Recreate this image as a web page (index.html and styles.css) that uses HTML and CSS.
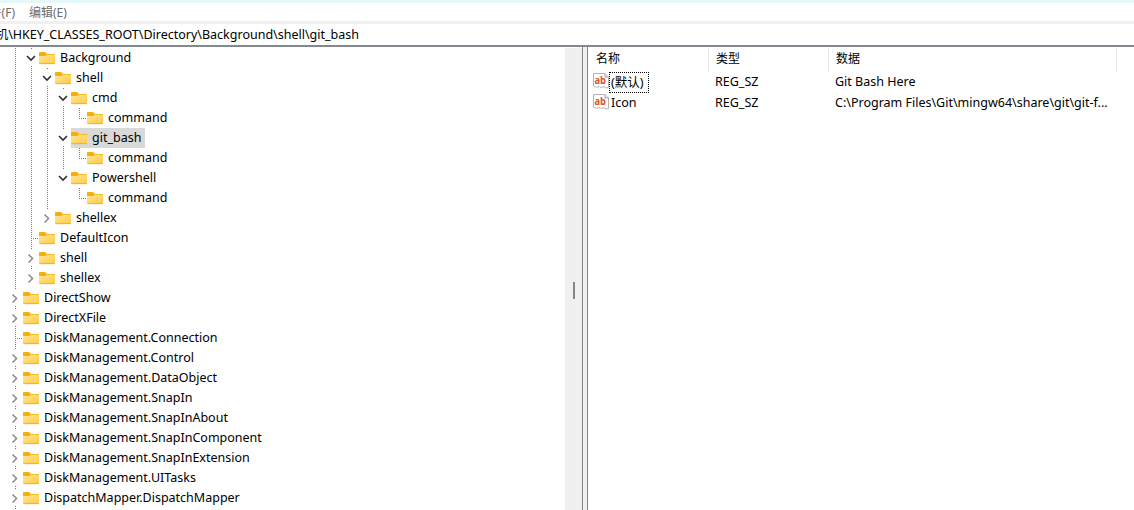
FILE: index.html
```
<!DOCTYPE html>
<html lang="zh-CN">
<head>
<meta charset="utf-8">
<title>注册表编辑器</title>
<link rel="stylesheet" href="styles.css">
</head>
<body>
<svg class="defs" aria-hidden="true">
  <defs>
    <linearGradient id="fold" x1="0" y1="0" x2="1" y2="1"><stop offset="0" stop-color="#ffe69a"/><stop offset="1" stop-color="#ffcb3f"/></linearGradient>
    <symbol id="folder" viewBox="0 0 16 16">
      <path d="M0 3Q0 2 1 2H6L8 4H15Q16 4 16 5V8H0Z" fill="#f5ae0c"/>
      <path d="M0 6H6L8 4.7H15Q16 4.7 16 5.5V13Q16 14 15 14H1Q0 14 0 13Z" fill="url(#fold)"/>
      <path d="M.3 13.3Q.6 13.7 1 13.7H15Q15.5 13.7 15.8 13.3" fill="none" stroke="#e8a520" stroke-width=".8"/>
    </symbol>
    <symbol id="down" viewBox="0 0 16 16"><path d="M4 6L8 10L12 6" fill="none" stroke="#303030" stroke-width="1.6"/></symbol>
    <symbol id="right" viewBox="0 0 16 16"><path d="M5.5 4.5L9.5 8.5L5.5 12.5" fill="none" stroke="#8c8c8c" stroke-width="1.5"/></symbol>
    <symbol id="string" viewBox="0 0 16 16">
      <path d="M.5 .5H12L15.5 4V14.5L13 15L11 13.5L8.5 14.5L6 13.5L3.5 14.5L.5 13Z" fill="#fff" stroke="#b5b5b5"/>
      <path d="M12 .5V4H15.5" fill="#eee" stroke="#a0a0a0"/>
      <text x="1.5" y="10.5" class="ab" textLength="11.5" lengthAdjust="spacingAndGlyphs">ab</text>
    </symbol>
  </defs>
</svg>
<div class="window">
  <div class="titlebar"></div>
  <nav class="menu"><span class="file">文件(F)</span><span>编辑(E)</span></nav>
  <div class="address"><span class="path">计算机\HKEY_CLASSES_ROOT\Directory\Background\shell\git_bash</span></div>
  <main class="panes">
    <div class="tree">
      <div class="row"><i class="line"></i><i class="node"><svg><use href="#down"/></svg></i><span class="item"><svg><use href="#folder"/></svg><b class="w-bg">Background</b></span></div>
      <div class="row"><i class="line"></i><i class="line"></i><i class="node"><svg><use href="#down"/></svg></i><span class="item"><svg><use href="#folder"/></svg><b>shell</b></span></div>
      <div class="row"><i class="line"></i><i class="line"></i><i class="line"></i><i class="node"><svg><use href="#down"/></svg></i><span class="item"><svg><use href="#folder"/></svg><b>cmd</b></span></div>
      <div class="row"><i class="line"></i><i class="line"></i><i class="line"></i><i class="line"></i><i class="leaf last"></i><span class="item"><svg><use href="#folder"/></svg><b>command</b></span></div>
      <div class="row"><i class="line"></i><i class="line"></i><i class="line"></i><i class="node"><svg><use href="#down"/></svg></i><span class="item selected"><svg><use href="#folder"/></svg><b>git_bash</b></span></div>
      <div class="row"><i class="line"></i><i class="line"></i><i class="line"></i><i class="line"></i><i class="leaf last"></i><span class="item"><svg><use href="#folder"/></svg><b>command</b></span></div>
      <div class="row"><i class="line"></i><i class="line"></i><i class="line"></i><i class="node last"><svg><use href="#down"/></svg></i><span class="item"><svg><use href="#folder"/></svg><b>Powershell</b></span></div>
      <div class="row"><i class="line"></i><i class="line"></i><i class="line"></i><i></i><i class="leaf last"></i><span class="item"><svg><use href="#folder"/></svg><b>command</b></span></div>
      <div class="row"><i class="line"></i><i class="line"></i><i class="node last"><svg><use href="#right"/></svg></i><span class="item"><svg><use href="#folder"/></svg><b>shellex</b></span></div>
      <div class="row"><i class="line"></i><i class="leaf"></i><span class="item"><svg><use href="#folder"/></svg><b>DefaultIcon</b></span></div>
      <div class="row"><i class="line"></i><i class="node"><svg><use href="#right"/></svg></i><span class="item"><svg><use href="#folder"/></svg><b>shell</b></span></div>
      <div class="row"><i class="line"></i><i class="node last"><svg><use href="#right"/></svg></i><span class="item"><svg><use href="#folder"/></svg><b>shellex</b></span></div>
      <div class="row"><i class="node"><svg><use href="#right"/></svg></i><span class="item"><svg><use href="#folder"/></svg><b>DirectShow</b></span></div>
      <div class="row"><i class="node"><svg><use href="#right"/></svg></i><span class="item"><svg><use href="#folder"/></svg><b>DirectXFile</b></span></div>
      <div class="row"><i class="leaf"></i><span class="item"><svg><use href="#folder"/></svg><b>DiskManagement.Connection</b></span></div>
      <div class="row"><i class="node"><svg><use href="#right"/></svg></i><span class="item"><svg><use href="#folder"/></svg><b>DiskManagement.Control</b></span></div>
      <div class="row"><i class="node"><svg><use href="#right"/></svg></i><span class="item"><svg><use href="#folder"/></svg><b>DiskManagement.DataObject</b></span></div>
      <div class="row"><i class="node"><svg><use href="#right"/></svg></i><span class="item"><svg><use href="#folder"/></svg><b>DiskManagement.SnapIn</b></span></div>
      <div class="row"><i class="node"><svg><use href="#right"/></svg></i><span class="item"><svg><use href="#folder"/></svg><b>DiskManagement.SnapInAbout</b></span></div>
      <div class="row"><i class="node"><svg><use href="#right"/></svg></i><span class="item"><svg><use href="#folder"/></svg><b>DiskManagement.SnapInComponent</b></span></div>
      <div class="row"><i class="node"><svg><use href="#right"/></svg></i><span class="item"><svg><use href="#folder"/></svg><b>DiskManagement.SnapInExtension</b></span></div>
      <div class="row"><i class="node"><svg><use href="#right"/></svg></i><span class="item"><svg><use href="#folder"/></svg><b>DiskManagement.UITasks</b></span></div>
      <div class="row"><i class="node"><svg><use href="#right"/></svg></i><span class="item"><svg><use href="#folder"/></svg><b>DispatchMapper.DispatchMapper</b></span></div>
      <div class="row"><i class="node"></i></div>
    </div>
    <div class="scrollbar"><div class="thumb"></div></div>
    <div class="splitter"></div>
    <div class="list">
      <div class="head"><span>名称</span><span>类型</span><span>数据</span></div>
      <div class="value"><span class="name"><svg><use href="#string"/></svg><span class="label focus">(默认)</span></span><span class="caps">REG_SZ</span><span>Git Bash Here</span></div>
      <div class="value"><span class="name"><svg><use href="#string"/></svg><span class="label">Icon</span></span><span class="caps">REG_SZ</span><span class="long">C:\Program Files\Git\mingw64\share\git\git-f...</span></div>
    </div>
  </main>
</div>
</body>
</html>
```
FILE: styles.css
```
* { box-sizing: border-box; }
body { margin: 0; background: #fff; color: #000; font: 12.5px "Noto Sans", "Noto Sans CJK SC", sans-serif; overflow: hidden; }
svg { display: block; width: 16px; height: 16px; flex: none; }
.defs { position: absolute; width: 0; height: 0; }
.window { display: flex; flex-direction: column; width: 1134px; height: 510px; overflow: hidden; white-space: nowrap; }
.titlebar { height: 3px; background: #e4f8f8; flex: none; }
.menu { display: flex; flex: none; gap: 14px; height: 21px; line-height: 19px; color: #6d6d6d; border-bottom: 3px solid #f0f0f0; font-size: 12px; }
.file { width: 15px; display: flex; justify-content: flex-end; }
.address { flex: none; height: 23px; line-height: 21px; border-bottom: 2px solid #828790; }
.path { display: flex; justify-content: flex-end; width: 359px; }
.panes { display: flex; flex: 1; min-height: 0; }
.tree { width: 565px; padding: 1px 0 0 7px; overflow: hidden; }
.row { display: flex; height: 20px; }
.row i { position: relative; width: 16px; height: 20px; flex: none; }
.line, .node, .leaf { background: repeating-linear-gradient(#777 0 1px, transparent 1px 2px) 8px 0 / 1px 20px no-repeat; }
.node svg { margin-top: 2px; }
.node { background-image: linear-gradient(#777 0 1px, transparent 1px 18px, #777 18px 19px, transparent 19px); }
.node.last { background-image: linear-gradient(#777 0 1px, transparent 1px); }
.leaf.last { background-size: 1px 10px; }
.leaf::after { content: ""; position: absolute; left: 8px; top: 10px; width: 8px; height: 1px; background: repeating-linear-gradient(90deg, #777 0 1px, transparent 1px 2px); }
.item { display: flex; align-items: center; gap: 5px; height: 20px; padding-right: 4px; }
.item b { font-weight: 400; line-height: 20px; }
.selected { background: #d9d9d9; }
.scrollbar { width: 17px; margin-top: 1px; background: #f0f0f0; display: flex; flex-direction: column; align-items: center; padding-top: 234px; }
.thumb { width: 2px; height: 17px; background: #868686; }
.splitter { width: 6px; background: #f0f0f0; border: solid #828790; border-width: 0 1px; }
.list { flex: 1; }
.head, .value { display: grid; grid-template-columns: 120px 120px 288px; }
.head { height: 25px; padding-top: 1px; line-height: 22px; font-size: 12px; }
.head span { padding-left: 7px; border-right: 1px solid #e5e5e5; }
.head { margin-left: 1px; }
.value { height: 21px; line-height: 20px; margin-left: 1px; }
.value > span { padding-left: 6px; }
.value > .name { display: flex; padding-left: 4px; }
.name svg { margin-top: 1px; }
.label { padding-left: 2px; height: 21px; }
.focus { width: 40px; border: 1px dotted #000; padding-left: 1px; line-height: 19px; }
.ab { font: bold 10px "Open Sans", sans-serif; fill: #d9502e; }
```
